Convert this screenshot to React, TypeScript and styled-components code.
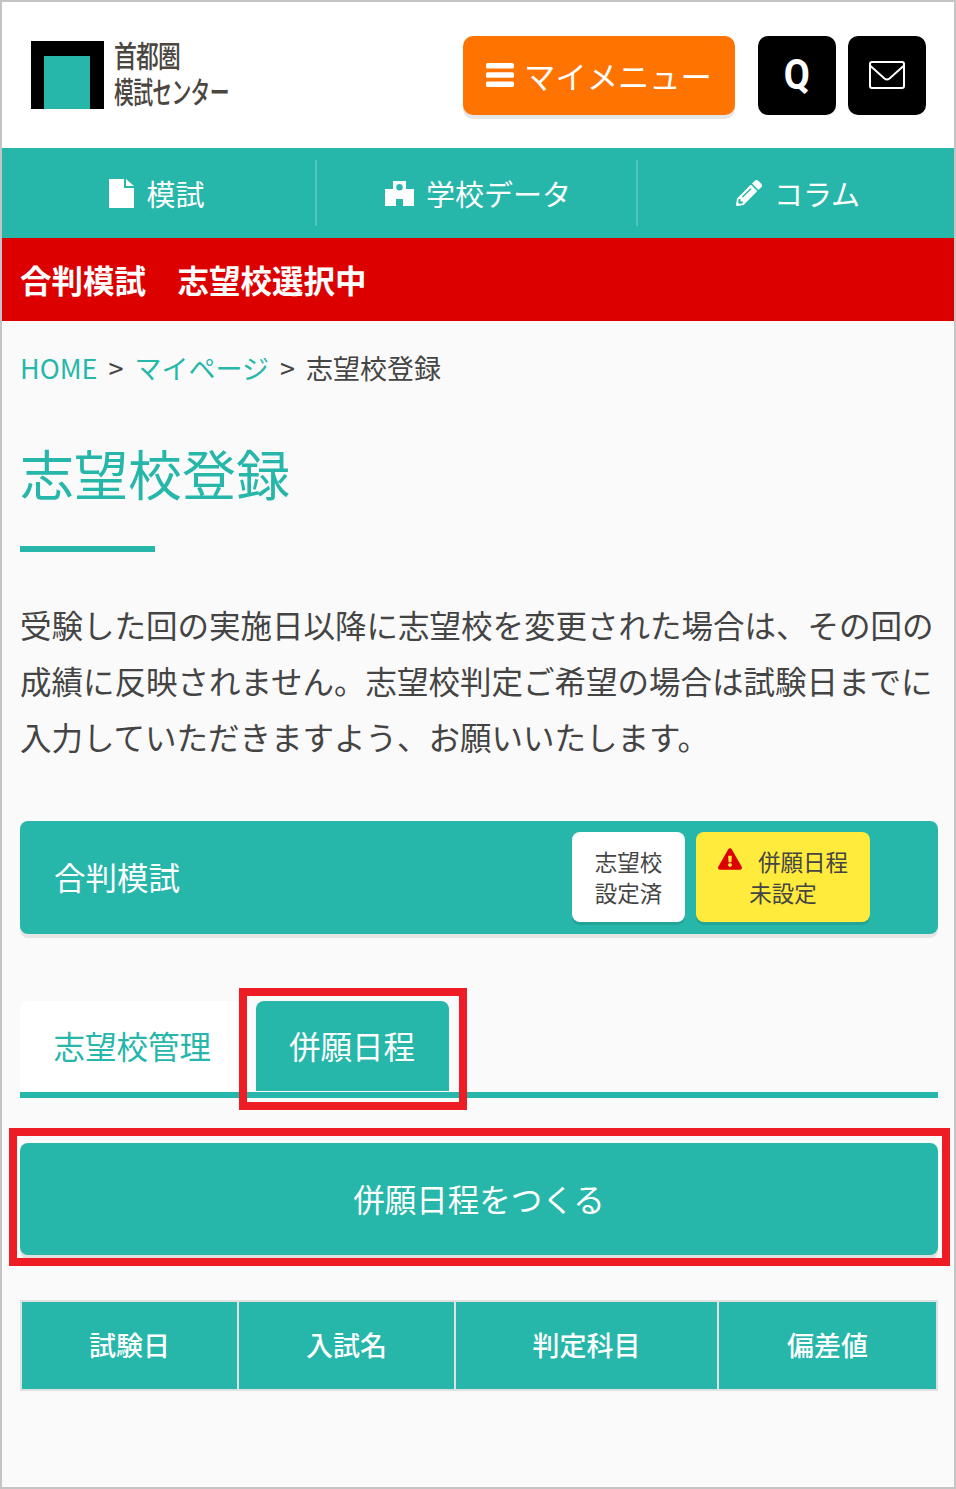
import styled, { createGlobalStyle } from "styled-components";
import { FaExclamationTriangle, FaPencilAlt } from "react-icons/fa";

const teal = "#26b7aa";

const GlobalStyle = createGlobalStyle`
  html, body { margin: 0; padding: 0; }
  body {
    background: #fafafa;
    font-family: "Noto Sans CJK JP", sans-serif;
    color: #444;
  }
  * { box-sizing: border-box; }
`;

const Page = styled.div`
  width: 956px;
  height: 1489px;
  border: 2px solid #c4c4c4;
  background: #fafafa;
  overflow: hidden;
`;

const Header = styled.header`
  height: 146px;
  background: #fff;
  display: flex;
  align-items: center;
  padding: 0 28px 0 29px;
`;

const Logo = styled.div`
  display: flex;
  align-items: center;
  gap: 10px;
  flex: 1;
`;

const LogoMark = styled.svg`
  width: 73px;
  height: 68px;
  display: block;
`;

const LogoText = styled.div`
  display: flex;
  flex-direction: column;
  color: #4b463f;
  font-weight: 500;
  margin-top: -7px;
`;

const LogoLine = styled.span<{ $scale: number }>`
  font-size: 30px;
  line-height: 36px;
  white-space: nowrap;
  transform: scaleX(${(p) => p.$scale});
  transform-origin: left center;
  letter-spacing: -1px;
`;

const HeaderButton = styled.a`
  height: 79px;
  border-radius: 10px;
  display: flex;
  align-items: center;
  justify-content: center;
  color: #fff;
`;

const MenuButton = styled(HeaderButton)`
  width: 272px;
  margin-right: 11px;
  gap: 10px;
  background: #ff7300;
  font-size: 31.3px;
  box-shadow: 0 4px 0 #e6e6e6;
`;

const BarsIcon = styled.svg`
  width: 28px;
  height: 24px;
  display: block;
`;

const SquareButton = styled(HeaderButton)`
  width: 78px;
  margin-left: 12px;
  background: #000;
`;

const QMark = styled.span`
  font-family: Roboto, sans-serif;
  font-size: 43px;
  font-weight: 700;
  line-height: 1;
  transform: scaleX(0.88);
  margin-top: -2px;
`;

const MailIcon = styled.svg`
  width: 36px;
  height: 28px;
  display: block;
`;

const NavBar = styled.nav`
  height: 90px;
  background: ${teal};
  display: grid;
  grid-template-columns: 315px 321px 1fr;
  align-items: center;
`;

const NavItem = styled.a<{ $divider?: boolean; $shift: number }>`
  height: 66px;
  display: flex;
  align-items: center;
  justify-content: center;
  gap: 12px;
  color: #fff;
  font-size: 29px;
  border-right: ${(p) => (p.$divider ? "2px solid rgba(255,255,255,0.2)" : "none")};
  padding-left: ${(p) => Math.max(p.$shift, 0)}px;
  padding-right: ${(p) => Math.max(-p.$shift, 0)}px;
`;

const FileIcon = styled.svg`
  width: 25px;
  height: 29px;
  display: block;
`;

const SchoolIcon = styled.svg`
  width: 29px;
  height: 25px;
  display: block;
`;

const PencilIcon = styled(FaPencilAlt)`
  width: 26px;
  height: 26px;
`;

const Notice = styled.div`
  height: 83px;
  background: #dd0000;
  color: #fff;
  font-size: 31.5px;
  font-weight: 700;
  display: flex;
  align-items: center;
  padding: 0 0 2px 18px;
`;

const Content = styled.main`
  padding: 0 16px 0 18px;
`;

const Breadcrumb = styled.div`
  height: 96px;
  padding-bottom: 4px;
  display: flex;
  align-items: center;
  font-size: 27px;
  color: #444;
  white-space: nowrap;
`;

const Crumb = styled.a`
  color: ${teal};
`;

const CrumbSep = styled.span`
  margin: 0 11px;
`;

const Title = styled.h1`
  margin: 0;
  font-size: 54px;
  line-height: 80px;
  font-weight: 400;
  color: ${teal};
  padding-top: 16px;
`;

const TitleRule = styled.div`
  width: 135px;
  height: 6px;
  margin-top: 33px;
  background: ${teal};
`;

const Lead = styled.p`
  margin: 44px 0 0;
  font-size: 31.5px;
  line-height: 56px;
  color: #444;
  white-space: nowrap;
`;

const ExamCard = styled.section`
  margin-top: 57px;
  height: 113px;
  background: ${teal};
  border-radius: 8px;
  box-shadow: 0 4px 0 #e6e6e6;
  display: flex;
  align-items: center;
  padding: 0 68px 2px 34px;
  color: #fff;
  font-size: 31.5px;
`;

const ExamName = styled.div`
  flex: 1;
  padding-bottom: 2px;
`;

const Badge = styled.div<{ $warn?: boolean }>`
  height: 90px;
  width: ${(p) => (p.$warn ? "174px" : "113px")};
  margin-left: ${(p) => (p.$warn ? "11px" : "0")};
  background: ${(p) => (p.$warn ? "#ffeb3b" : "#fff")};
  color: #444;
  border-radius: 8px;
  box-shadow: 0 3px 0 rgba(0, 0, 0, 0.1);
  font-size: 22.5px;
  line-height: 31px;
  display: flex;
  flex-direction: column;
  align-items: center;
  justify-content: center;
`;

const WarnLine = styled.span`
  display: flex;
  align-items: center;
  gap: 16px;
  svg { width: 24px; height: 24px; color: #dd0000; margin-top: -4px; }
`;

const TabRow = styled.div`
  margin-top: 67px;
  height: 97px;
  display: flex;
  gap: 11px;
  border-bottom: 6px solid ${teal};
  position: relative;
`;

const Tab = styled.a<{ $active?: boolean }>`
  height: 90px;
  padding: 0 33.5px 2px;
  display: flex;
  align-items: center;
  font-size: 31.5px;
  border-radius: 8px 8px 0 0;
  background: ${(p) => (p.$active ? teal : "#fff")};
  color: ${(p) => (p.$active ? "#fff" : teal)};
`;

const Marker = styled.div`
  position: absolute;
  border: 8px solid #ee1c25;
  pointer-events: none;
`;

const TabMarker = styled(Marker)`
  left: 219px;
  top: -13px;
  width: 228px;
  height: 122px;
`;

const ActionWrap = styled.div`
  margin-top: 45px;
  position: relative;
`;

const ActionMarker = styled(Marker)`
  left: -11px;
  top: -15px;
  width: 941px;
  height: 138px;
`;

const ActionButton = styled.a`
  height: 112px;
  padding-bottom: 2px;
  background: ${teal};
  color: #fff;
  border-radius: 8px;
  box-shadow: 0 4px 0 #e0e0e0;
  font-size: 31.5px;
  display: flex;
  align-items: center;
  justify-content: center;
`;

const ScheduleTable = styled.table`
  margin-top: 45px;
  width: 918px;
  height: 91px;
  border-collapse: separate;
  border-spacing: 0;
  border-top: 2px solid #e0e0e0;
  border-left: 2px solid #e0e0e0;
  table-layout: fixed;
`;

const HeadCell = styled.th<{ $width: number }>`
  width: ${(p) => p.$width}px;
  background: ${teal};
  color: #fff;
  border-right: 2px solid #e0e0e0;
  border-bottom: 2px solid #e0e0e0;
  font-size: 27px;
  font-weight: 500;
  text-align: center;
  padding: 0 0 2px;
`;

const columns = [
  { label: "試験日", width: 217 },
  { label: "入試名", width: 217 },
  { label: "判定科目", width: 263 },
  { label: "偏差値", width: 219 },
];

function App() {
  return (
    <Page>
      <GlobalStyle />
      <Header>
        <Logo>
          <LogoMark viewBox="0 0 73 68">
            <rect width="73" height="68" fill="#000" />
            <rect x="13" y="15" width="46" height="53" fill={teal} />
          </LogoMark>
          <LogoText>
            <LogoLine $scale={0.76}>首都圏</LogoLine>
            <LogoLine $scale={0.66}>模試センター</LogoLine>
          </LogoText>
        </Logo>
        <MenuButton>
          <BarsIcon viewBox="0 0 28 24" fill="currentColor">
            <rect y="0" width="28" height="5.500" rx="1.500" />
            <rect y="9.250" width="28" height="5.500" rx="1.500" />
            <rect y="18.500" width="28" height="5.500" rx="1.500" />
          </BarsIcon>
          マイメニュー
        </MenuButton>
        <SquareButton>
          <QMark>Q</QMark>
        </SquareButton>
        <SquareButton>
          <MailIcon viewBox="0 0 36 28" fill="none" stroke="currentColor" strokeWidth="2">
            <rect x="1" y="1" width="34" height="26" rx="2" />
            <path d="M1.500 5 15.500 17.500q2.500 2 5 0L34.500 5" />
          </MailIcon>
        </SquareButton>
      </Header>
      <NavBar>
        <NavItem $divider $shift={-3}>
          <FileIcon viewBox="0 0 25 29" fill="currentColor">
            <path d="M0 0h15v9h10v20H0zM17 0l8 7h-8z" />
          </FileIcon>
          模試
        </NavItem>
        <NavItem $divider $shift={3}>
          <SchoolIcon viewBox="0 0 29 25" fill="currentColor">
            <path
              fillRule="evenodd"
              d="M8 0h13v8h8v17H18v-7h-7v7H0V8h8zM14.500 3a3.200 3.200 0 1 0 0 6.400 3.200 3.200 0 0 0 0-6.400z"
            />
          </SchoolIcon>
          学校データ
        </NavItem>
        <NavItem $shift={4}>
          <PencilIcon />
          コラム
        </NavItem>
      </NavBar>
      <Notice>合判模試　志望校選択中</Notice>
      <Content>
        <Breadcrumb>
          <Crumb>HOME</Crumb>
          <CrumbSep>&gt;</CrumbSep>
          <Crumb>マイページ</Crumb>
          <CrumbSep>&gt;</CrumbSep>
          志望校登録
        </Breadcrumb>
        <Title>志望校登録</Title>
        <TitleRule />
        <Lead>
          受験した回の実施日以降に志望校を変更された場合は、その回の
          <br />
          成績に反映されません。志望校判定ご希望の場合は試験日までに
          <br />
          入力していただきますよう、お願いいたします。
        </Lead>
        <ExamCard>
          <ExamName>合判模試</ExamName>
          <Badge>
            <span>志望校</span>
            <span>設定済</span>
          </Badge>
          <Badge $warn>
            <WarnLine>
              <FaExclamationTriangle />
              併願日程
            </WarnLine>
            <span>未設定</span>
          </Badge>
        </ExamCard>
        <TabRow>
          <Tab>志望校管理</Tab>
          <Tab $active>併願日程</Tab>
          <TabMarker />
        </TabRow>
        <ActionWrap>
          <ActionButton>併願日程をつくる</ActionButton>
          <ActionMarker />
        </ActionWrap>
        <ScheduleTable>
          <thead>
            <tr>
              {columns.map((col) => (
                <HeadCell key={col.label} $width={col.width}>
                  {col.label}
                </HeadCell>
              ))}
            </tr>
          </thead>
        </ScheduleTable>
      </Content>
    </Page>
  );
}

export default App;
